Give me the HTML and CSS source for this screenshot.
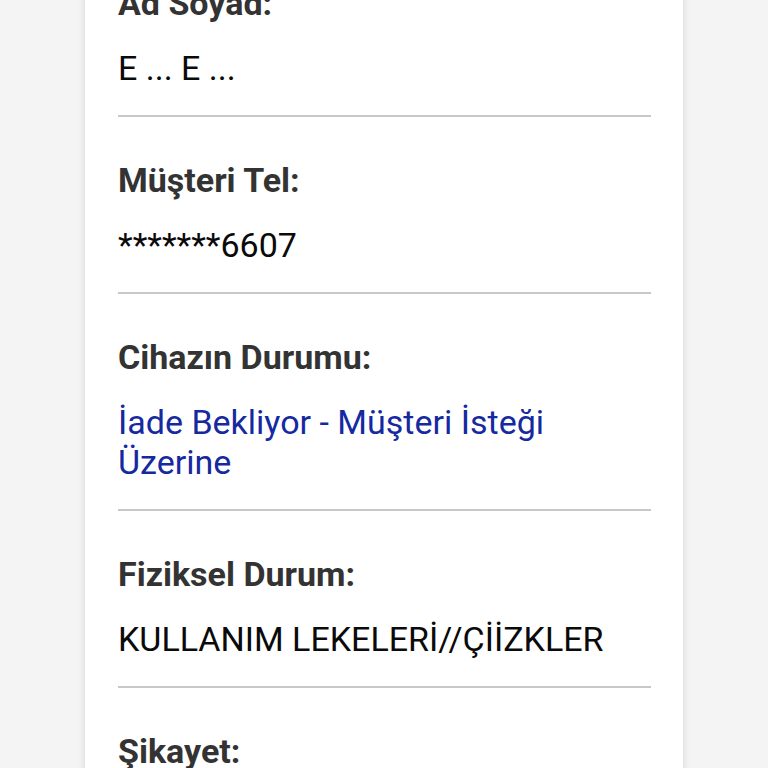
FILE: index.html
```html
<!DOCTYPE html>
<html lang="tr">
<head>
  <meta charset="UTF-8">
  <meta name="viewport" content="width=device-width, initial-scale=1.0">
  <title>Cihaz Bilgileri</title>
  <link rel="stylesheet" href="styles.css">
</head>
<body>
  <div class="card">
    <div class="field">
      <div class="label">Ad Soyad:</div>
      <div class="value">E ... E ...</div>
    </div>
    <div class="field">
      <div class="label">Müşteri Tel:</div>
      <div class="value">*******6607</div>
    </div>
    <div class="field">
      <div class="label">Cihazın Durumu:</div>
      <div class="value status">İade Bekliyor - Müşteri İsteği Üzerine</div>
    </div>
    <div class="field">
      <div class="label">Fiziksel Durum:</div>
      <div class="value">KULLANIM LEKELERİ//ÇİİZKLER</div>
    </div>
    <div class="field">
      <div class="label">Şikayet:</div>
      <div class="value">&nbsp;</div>
    </div>
  </div>
</body>
</html>
```

FILE: styles.css
```css
/* Page */
body {
  margin: 0;
  padding: 0 85px;
  background-color: #f4f4f4;
  font-family: 'Roboto', 'Noto Sans', sans-serif;
  overflow: hidden;
}

.card {
  width: 598px;
  margin-top: -60px;
  padding: 0 32px 0 33px;
  box-sizing: border-box;
  background-color: #ffffff;
  box-shadow: 0 0 8px rgba(0, 0, 0, 0.12);
}

.field {
  padding: 43px 0 27px;
  border-bottom: 2px solid #c8c8c8;
}

.label {
  font-size: 34px;
  line-height: 40px;
  font-weight: bold;
  color: #333333;
  margin-bottom: 25px;
}

.value {
  font-size: 34px;
  line-height: 40px;
  color: #0a0a0a;
}

.status {
  color: #1529a0;
}
```
